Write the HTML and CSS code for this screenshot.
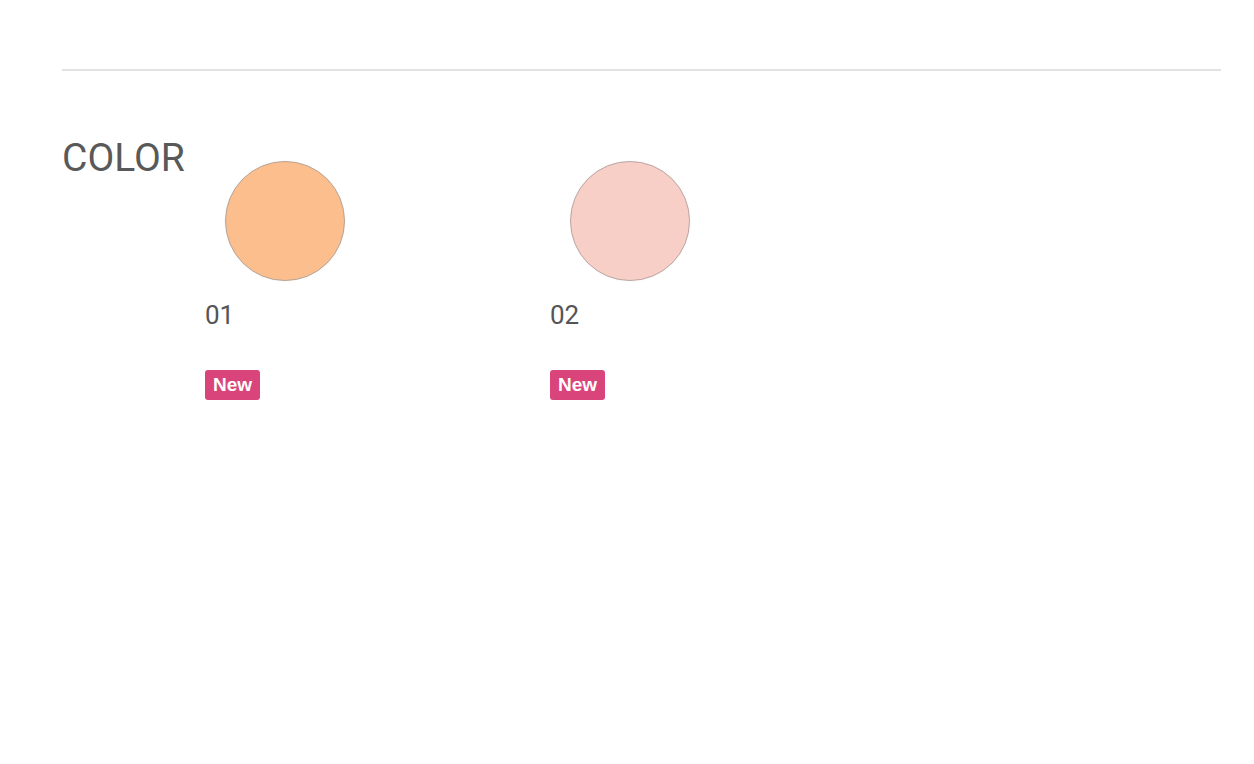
FILE: index.html
```html
<!DOCTYPE html>
<html lang="ja">
<head>
<meta charset="utf-8">
<link rel="stylesheet" href="styles.css">
</head>
<body>
<div class="page">
  <hr class="rule">
  <section class="color-section">
    <h2 class="title">COLOR</h2>
    <ul class="swatches">
      <li class="swatch">
        <span class="chip chip-01"></span>
        <p class="num">01</p>
        <span class="badge">New</span>
      </li>
      <li class="swatch">
        <span class="chip chip-02"></span>
        <p class="num">02</p>
        <span class="badge">New</span>
      </li>
    </ul>
  </section>
</div>
</body>
</html>
```
FILE: styles.css
```css
html, body {
  margin: 0;
  padding: 0;
  background: #fff;
}
body {
  font-family: Roboto, "Noto Sans CJK JP", sans-serif;
  color: #555;
}
.page {
  margin: 0 33px 0 62px;
  padding-top: 69px;
}
.rule {
  margin: 0;
  border: 0;
  height: 2px;
  background: #e2e2e2;
}
.color-section {
  display: flex;
  align-items: flex-start;
  padding-top: 69px;
}
.title {
  margin: 0;
  width: 143px;
  flex: none;
  font-weight: 400;
  font-size: 39px;
  line-height: 36px;
  color: #595959;
  letter-spacing: 0;
}
.swatches {
  list-style: none;
  margin: 0;
  padding: 0;
  display: flex;
  gap: 185px;
}
.swatch {
  width: 160px;
  display: flex;
  flex-direction: column;
  align-items: flex-start;
  padding-top: 21px;
}
.chip {
  display: block;
  width: 118px;
  height: 118px;
  border-radius: 50%;
  border: 1px solid #b7a597;
  margin-left: 20px;
  box-shadow: 0 0 2px rgba(0, 0, 0, 0.06);
}
.chip-01 { background: #fdbe8e; }
.chip-02 { background: #f8cfc6; border-color: #bca7a4; }
.num {
  margin: 18px 0 0;
  font-size: 26px;
  line-height: 32px;
  color: #555;
}
.badge {
  margin-top: 39px;
  display: inline-block;
  background: #d9457b;
  color: #fff;
  font-family: "Liberation Sans", Arial, sans-serif;
  font-weight: 700;
  font-size: 19px;
  line-height: 30px;
  padding: 0 8px;
  border-radius: 3px;
}
```
